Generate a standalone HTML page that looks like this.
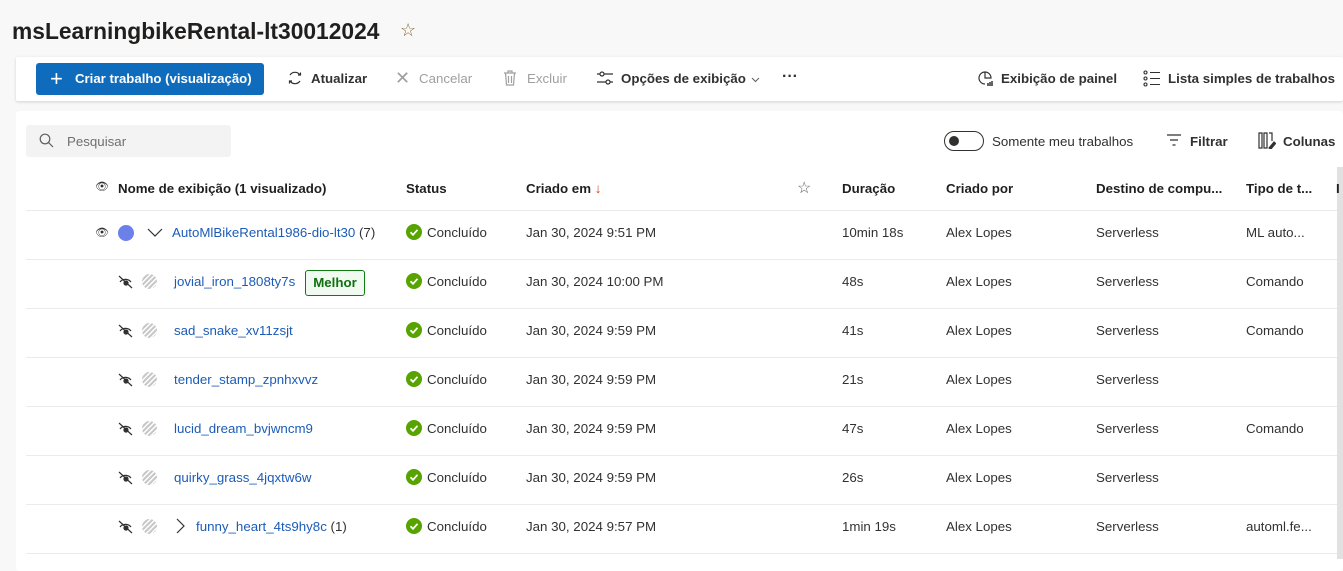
<!DOCTYPE html>
<html><head><meta charset="utf-8"><style>
*{margin:0;padding:0;box-sizing:border-box}
body{width:1343px;height:559px;background:#f8f8f8;font-family:"Liberation Sans",sans-serif;font-size:13.3px;color:#323130;position:relative;overflow:hidden}
.a{position:absolute;white-space:nowrap}
.h1{left:12px;top:18px;font-size:22.8px;font-weight:bold;color:#201f1e}
.tb{left:16px;top:57px;width:1327px;height:44px;background:#fff;box-shadow:0 1px 3px rgba(0,0,0,.15);border-radius:2px}
.btn{left:36px;top:63px;width:228px;height:32px;background:#0f6cbd;border-radius:3px;color:#fff;font-weight:bold;font-size:13.2px}
.card{left:16px;top:111px;width:1327px;height:460px;background:#fff;border-radius:4px}
.srch{left:26px;top:125px;width:205px;height:32px;background:#f3f3f3;border-radius:3px}
.b{font-weight:bold;color:#201f1e}
.dis{color:#a19f9d}
.hr{left:26px;width:1311px;height:1px;background:#ebebeb}
.lnk{color:#1c5cb8}
.ok{width:16px;height:16px;border-radius:50%;background:#57a300}
.hat{width:15px;height:15px;border-radius:50%;background:repeating-linear-gradient(135deg,#c8c8c8 0 2px,#fff 2px 3.5px)}
</style></head><body>
<div class="a h1">msLearningbikeRental-lt30012024</div>
<div class="a" style="left:400px;top:20px;font-size:18px;color:#8a6d3b">☆</div>
<div class="a tb"></div>
<div class="a btn"><span class="a" style="left:14px;top:3px;font-size:22px;font-weight:normal">+</span><span class="a" style="left:39px;top:8px">Criar trabalho (visualização)</span></div>
<svg class="a" style="left:287px;top:70px" width="16" height="16" viewBox="0 0 16 16" fill="none" stroke="#323130" stroke-width="1.2"><path d="M3 5a6 6 0 0 1 10 0M13 11a6 6 0 0 1-10 0M11 5h2.5V2.5M5 11H2.5v2.5"/></svg>
<div class="a b" style="left:311px;top:71px;font-weight:bold;color:#323130">Atualizar</div>
<div class="a dis" style="left:395px;top:68px;font-size:18px">✕</div>
<div class="a dis" style="left:419px;top:71px">Cancelar</div>
<svg class="a" style="left:503px;top:70px" width="14" height="16" viewBox="0 0 14 16" fill="none" stroke="#a19f9d" stroke-width="1.2"><path d="M1 3h12M5 3V1h4v2M2.5 3l1 12h7l1-12M5.5 6v7M8.5 6v7"/></svg>
<div class="a dis" style="left:527px;top:71px">Excluir</div>
<svg class="a" style="left:596px;top:70px" width="18" height="16" viewBox="0 0 18 16" fill="none" stroke="#323130" stroke-width="1.2"><path d="M1 4h16M1 12h16"/><circle cx="6" cy="4" r="2" fill="#fff"/><circle cx="12" cy="12" r="2" fill="#fff"/></svg>
<div class="a" style="left:621px;top:71px;font-weight:bold">Opções de exibição</div>
<svg class="a" style="left:751px;top:77px" width="9" height="6" viewBox="0 0 9 6" fill="none" stroke="#605e5c" stroke-width="1"><path d="M1 1l3.5 3.5L8 1"/></svg>
<div class="a" style="left:782px;top:68px;font-weight:bold;font-size:16px">···</div>
<svg class="a" style="left:977px;top:70px" width="18" height="18" viewBox="0 0 18 18" fill="none" stroke="#323130" stroke-width="1.2"><path d="M8 2a6 6 0 1 0 0 12M8 2v6h6a6 6 0 0 0-6-6"/><path d="M11 16v-3M13 16v-4M15 16v-5" stroke-width="1.5"/></svg>
<div class="a" style="left:1001px;top:71px;font-weight:bold">Exibição de painel</div>
<svg class="a" style="left:1143px;top:70px" width="18" height="17" viewBox="0 0 18 17" fill="none" stroke="#323130" stroke-width="1.1"><circle cx="2.5" cy="2.5" r="1.5"/><circle cx="2.5" cy="8.5" r="1.5"/><circle cx="2.5" cy="14.5" r="1.5"/><path d="M7 2.5h10M7 8.5h10M7 14.5h10"/></svg>
<div class="a" style="left:1168px;top:71px;font-weight:bold">Lista simples de trabalhos</div>

<div class="a card"></div>
<div class="a srch"></div>
<svg class="a" style="left:39px;top:133px" width="15" height="15" viewBox="0 0 15 15" fill="none" stroke="#605e5c" stroke-width="1.2"><circle cx="6" cy="6" r="4.8"/><path d="M9.5 9.5l4.5 4.5"/></svg>
<div class="a" style="left:67px;top:134px;color:#707070">Pesquisar</div>
<div class="a" style="left:944px;top:131px;width:40px;height:20px;border:1px solid #323130;border-radius:10px"><div class="a" style="left:4px;top:4px;width:10px;height:10px;border-radius:50%;background:#323130"></div></div>
<div class="a" style="left:992px;top:134px">Somente meu trabalhos</div>
<svg class="a" style="left:1167px;top:134px" width="14" height="12" viewBox="0 0 14 12" stroke="#323130" stroke-width="1.2"><path d="M0 1h14M3 6h8M5.5 11h3"/></svg>
<div class="a" style="left:1190px;top:134px;font-weight:bold">Filtrar</div>
<svg class="a" style="left:1258px;top:132px" width="18" height="17" viewBox="0 0 18 17" fill="none" stroke="#323130" stroke-width="1.2"><path d="M1 1h3v15H1zM6 1h3v15H6zM11 1h3v8"/><path d="M11 16l5-6 1.5 1.5-5 6z" fill="#323130"/></svg>
<div class="a" style="left:1283px;top:134px;font-weight:bold">Colunas</div>
<div class="a" style="left:1337px;top:167px;width:6px;height:392px;background:#e1e1e1"></div>

<div class="a" style="left:95px;top:180px;font-size:11px">👁</div>
<div class="a b" style="left:118px;top:181px">Nome de exibição (1 visualizado)</div>
<div class="a b" style="left:406px;top:181px">Status</div>
<div class="a b" style="left:526px;top:181px">Criado em <span style="color:#d83b01;font-weight:normal">↓</span></div>
<div class="a" style="left:797px;top:178px;font-size:16px;color:#605e5c">☆</div>
<div class="a b" style="left:842px;top:181px">Duração</div>
<div class="a b" style="left:946px;top:181px">Criado por</div>
<div class="a b" style="left:1096px;top:181px">Destino de compu...</div>
<div class="a b" style="left:1246px;top:181px">Tipo de t...</div>
<div class="a b" style="left:1336px;top:181px">I</div>

<div class="a hr" style="top:210px"></div>
<div class="a hr" style="top:259px"></div>
<div class="a hr" style="top:308px"></div>
<div class="a hr" style="top:357px"></div>
<div class="a hr" style="top:406px"></div>
<div class="a hr" style="top:455px"></div>
<div class="a hr" style="top:504px"></div>
<div class="a hr" style="top:553px"></div>

<div class="a" style="left:95px;top:226px;font-size:11px">👁</div>
<div class="a" style="left:118px;top:225px;width:16px;height:16px;border-radius:50%;background:#6b80e8"></div>
<svg class="a" style="left:147px;top:228px" width="16" height="10" viewBox="0 0 16 10" fill="none" stroke="#323130" stroke-width="1.2"><path d="M1 1l7 7 7-7"/></svg>
<div class="a" style="left:172px;top:225px"><span class="lnk">AutoMlBikeRental1986-dio-lt30</span> (7)</div>

<div class="a ok" style="left:406px;top:224px"></div>
<div class="a ok" style="left:406px;top:273px"></div>
<div class="a ok" style="left:406px;top:322px"></div>
<div class="a ok" style="left:406px;top:371px"></div>
<div class="a ok" style="left:406px;top:420px"></div>
<div class="a ok" style="left:406px;top:469px"></div>
<div class="a ok" style="left:406px;top:518px"></div>

<svg class="a" style="left:406px;top:224px" width="16" height="310" viewBox="0 0 16 310" fill="none" stroke="#fff" stroke-width="1.8">
<path d="M4.5 8.3l2.5 2.5 4.5-5"/><path d="M4.5 57.3l2.5 2.5 4.5-5"/><path d="M4.5 106.3l2.5 2.5 4.5-5"/><path d="M4.5 155.3l2.5 2.5 4.5-5"/><path d="M4.5 204.3l2.5 2.5 4.5-5"/><path d="M4.5 253.3l2.5 2.5 4.5-5"/><path d="M4.5 302.3l2.5 2.5 4.5-5"/>
</svg>

<div class="a" style="left:427px;top:225px">Concluído</div>
<div class="a" style="left:427px;top:274px">Concluído</div>
<div class="a" style="left:427px;top:323px">Concluído</div>
<div class="a" style="left:427px;top:372px">Concluído</div>
<div class="a" style="left:427px;top:421px">Concluído</div>
<div class="a" style="left:427px;top:470px">Concluído</div>
<div class="a" style="left:427px;top:519px">Concluído</div>

<div class="a" style="left:526px;top:225px">Jan 30, 2024 9:51 PM</div>
<div class="a" style="left:526px;top:274px">Jan 30, 2024 10:00 PM</div>
<div class="a" style="left:526px;top:323px">Jan 30, 2024 9:59 PM</div>
<div class="a" style="left:526px;top:372px">Jan 30, 2024 9:59 PM</div>
<div class="a" style="left:526px;top:421px">Jan 30, 2024 9:59 PM</div>
<div class="a" style="left:526px;top:470px">Jan 30, 2024 9:59 PM</div>
<div class="a" style="left:526px;top:519px">Jan 30, 2024 9:57 PM</div>

<div class="a" style="left:842px;top:225px">10min 18s</div>
<div class="a" style="left:842px;top:274px">48s</div>
<div class="a" style="left:842px;top:323px">41s</div>
<div class="a" style="left:842px;top:372px">21s</div>
<div class="a" style="left:842px;top:421px">47s</div>
<div class="a" style="left:842px;top:470px">26s</div>
<div class="a" style="left:842px;top:519px">1min 19s</div>

<div class="a" style="left:946px;top:225px">Alex Lopes</div>
<div class="a" style="left:946px;top:274px">Alex Lopes</div>
<div class="a" style="left:946px;top:323px">Alex Lopes</div>
<div class="a" style="left:946px;top:372px">Alex Lopes</div>
<div class="a" style="left:946px;top:421px">Alex Lopes</div>
<div class="a" style="left:946px;top:470px">Alex Lopes</div>
<div class="a" style="left:946px;top:519px">Alex Lopes</div>

<div class="a" style="left:1096px;top:225px">Serverless</div>
<div class="a" style="left:1096px;top:274px">Serverless</div>
<div class="a" style="left:1096px;top:323px">Serverless</div>
<div class="a" style="left:1096px;top:372px">Serverless</div>
<div class="a" style="left:1096px;top:421px">Serverless</div>
<div class="a" style="left:1096px;top:470px">Serverless</div>
<div class="a" style="left:1096px;top:519px">Serverless</div>

<div class="a" style="left:1246px;top:225px">ML auto...</div>
<div class="a" style="left:1246px;top:274px">Comando</div>
<div class="a" style="left:1246px;top:323px">Comando</div>
<div class="a" style="left:1246px;top:421px">Comando</div>
<div class="a" style="left:1246px;top:519px">automl.fe...</div>

<svg class="a" style="left:118px;top:275px" width="15" height="14" viewBox="0 0 15 14" fill="none" stroke="#323130" stroke-width="1.2"><path d="M1 1l13 12M2 7c2-3 8-4 11 0"/><circle cx="8" cy="8" r="2" fill="#323130"/></svg>
<div class="a hat" style="left:142px;top:274px"></div>
<div class="a lnk" style="left:174px;top:274px">jovial_iron_1808ty7s</div>
<div class="a" style="left:305px;top:270px;width:60px;height:26px;border:1px solid #107c10;border-radius:3px;background:#f1faf1;color:#0e700e;font-weight:bold;text-align:center;line-height:24px">Melhor</div>

<svg class="a" style="left:118px;top:324px" width="15" height="14" viewBox="0 0 15 14" fill="none" stroke="#323130" stroke-width="1.2"><path d="M1 1l13 12M2 7c2-3 8-4 11 0"/><circle cx="8" cy="8" r="2" fill="#323130"/></svg>
<div class="a hat" style="left:142px;top:323px"></div>
<div class="a lnk" style="left:174px;top:323px">sad_snake_xv11zsjt</div>

<svg class="a" style="left:118px;top:373px" width="15" height="14" viewBox="0 0 15 14" fill="none" stroke="#323130" stroke-width="1.2"><path d="M1 1l13 12M2 7c2-3 8-4 11 0"/><circle cx="8" cy="8" r="2" fill="#323130"/></svg>
<div class="a hat" style="left:142px;top:372px"></div>
<div class="a lnk" style="left:174px;top:372px">tender_stamp_zpnhxvvz</div>

<svg class="a" style="left:118px;top:422px" width="15" height="14" viewBox="0 0 15 14" fill="none" stroke="#323130" stroke-width="1.2"><path d="M1 1l13 12M2 7c2-3 8-4 11 0"/><circle cx="8" cy="8" r="2" fill="#323130"/></svg>
<div class="a hat" style="left:142px;top:421px"></div>
<div class="a lnk" style="left:174px;top:421px">lucid_dream_bvjwncm9</div>

<svg class="a" style="left:118px;top:471px" width="15" height="14" viewBox="0 0 15 14" fill="none" stroke="#323130" stroke-width="1.2"><path d="M1 1l13 12M2 7c2-3 8-4 11 0"/><circle cx="8" cy="8" r="2" fill="#323130"/></svg>
<div class="a hat" style="left:142px;top:470px"></div>
<div class="a lnk" style="left:174px;top:470px">quirky_grass_4jqxtw6w</div>

<svg class="a" style="left:118px;top:520px" width="15" height="14" viewBox="0 0 15 14" fill="none" stroke="#323130" stroke-width="1.2"><path d="M1 1l13 12M2 7c2-3 8-4 11 0"/><circle cx="8" cy="8" r="2" fill="#323130"/></svg>
<div class="a hat" style="left:142px;top:519px"></div>
<svg class="a" style="left:175px;top:518px" width="10" height="16" viewBox="0 0 10 16" fill="none" stroke="#323130" stroke-width="1.2"><path d="M2 1l7 7-7 7"/></svg>
<div class="a" style="left:196px;top:519px"><span class="lnk">funny_heart_4ts9hy8c</span> (1)</div>
</body></html>
